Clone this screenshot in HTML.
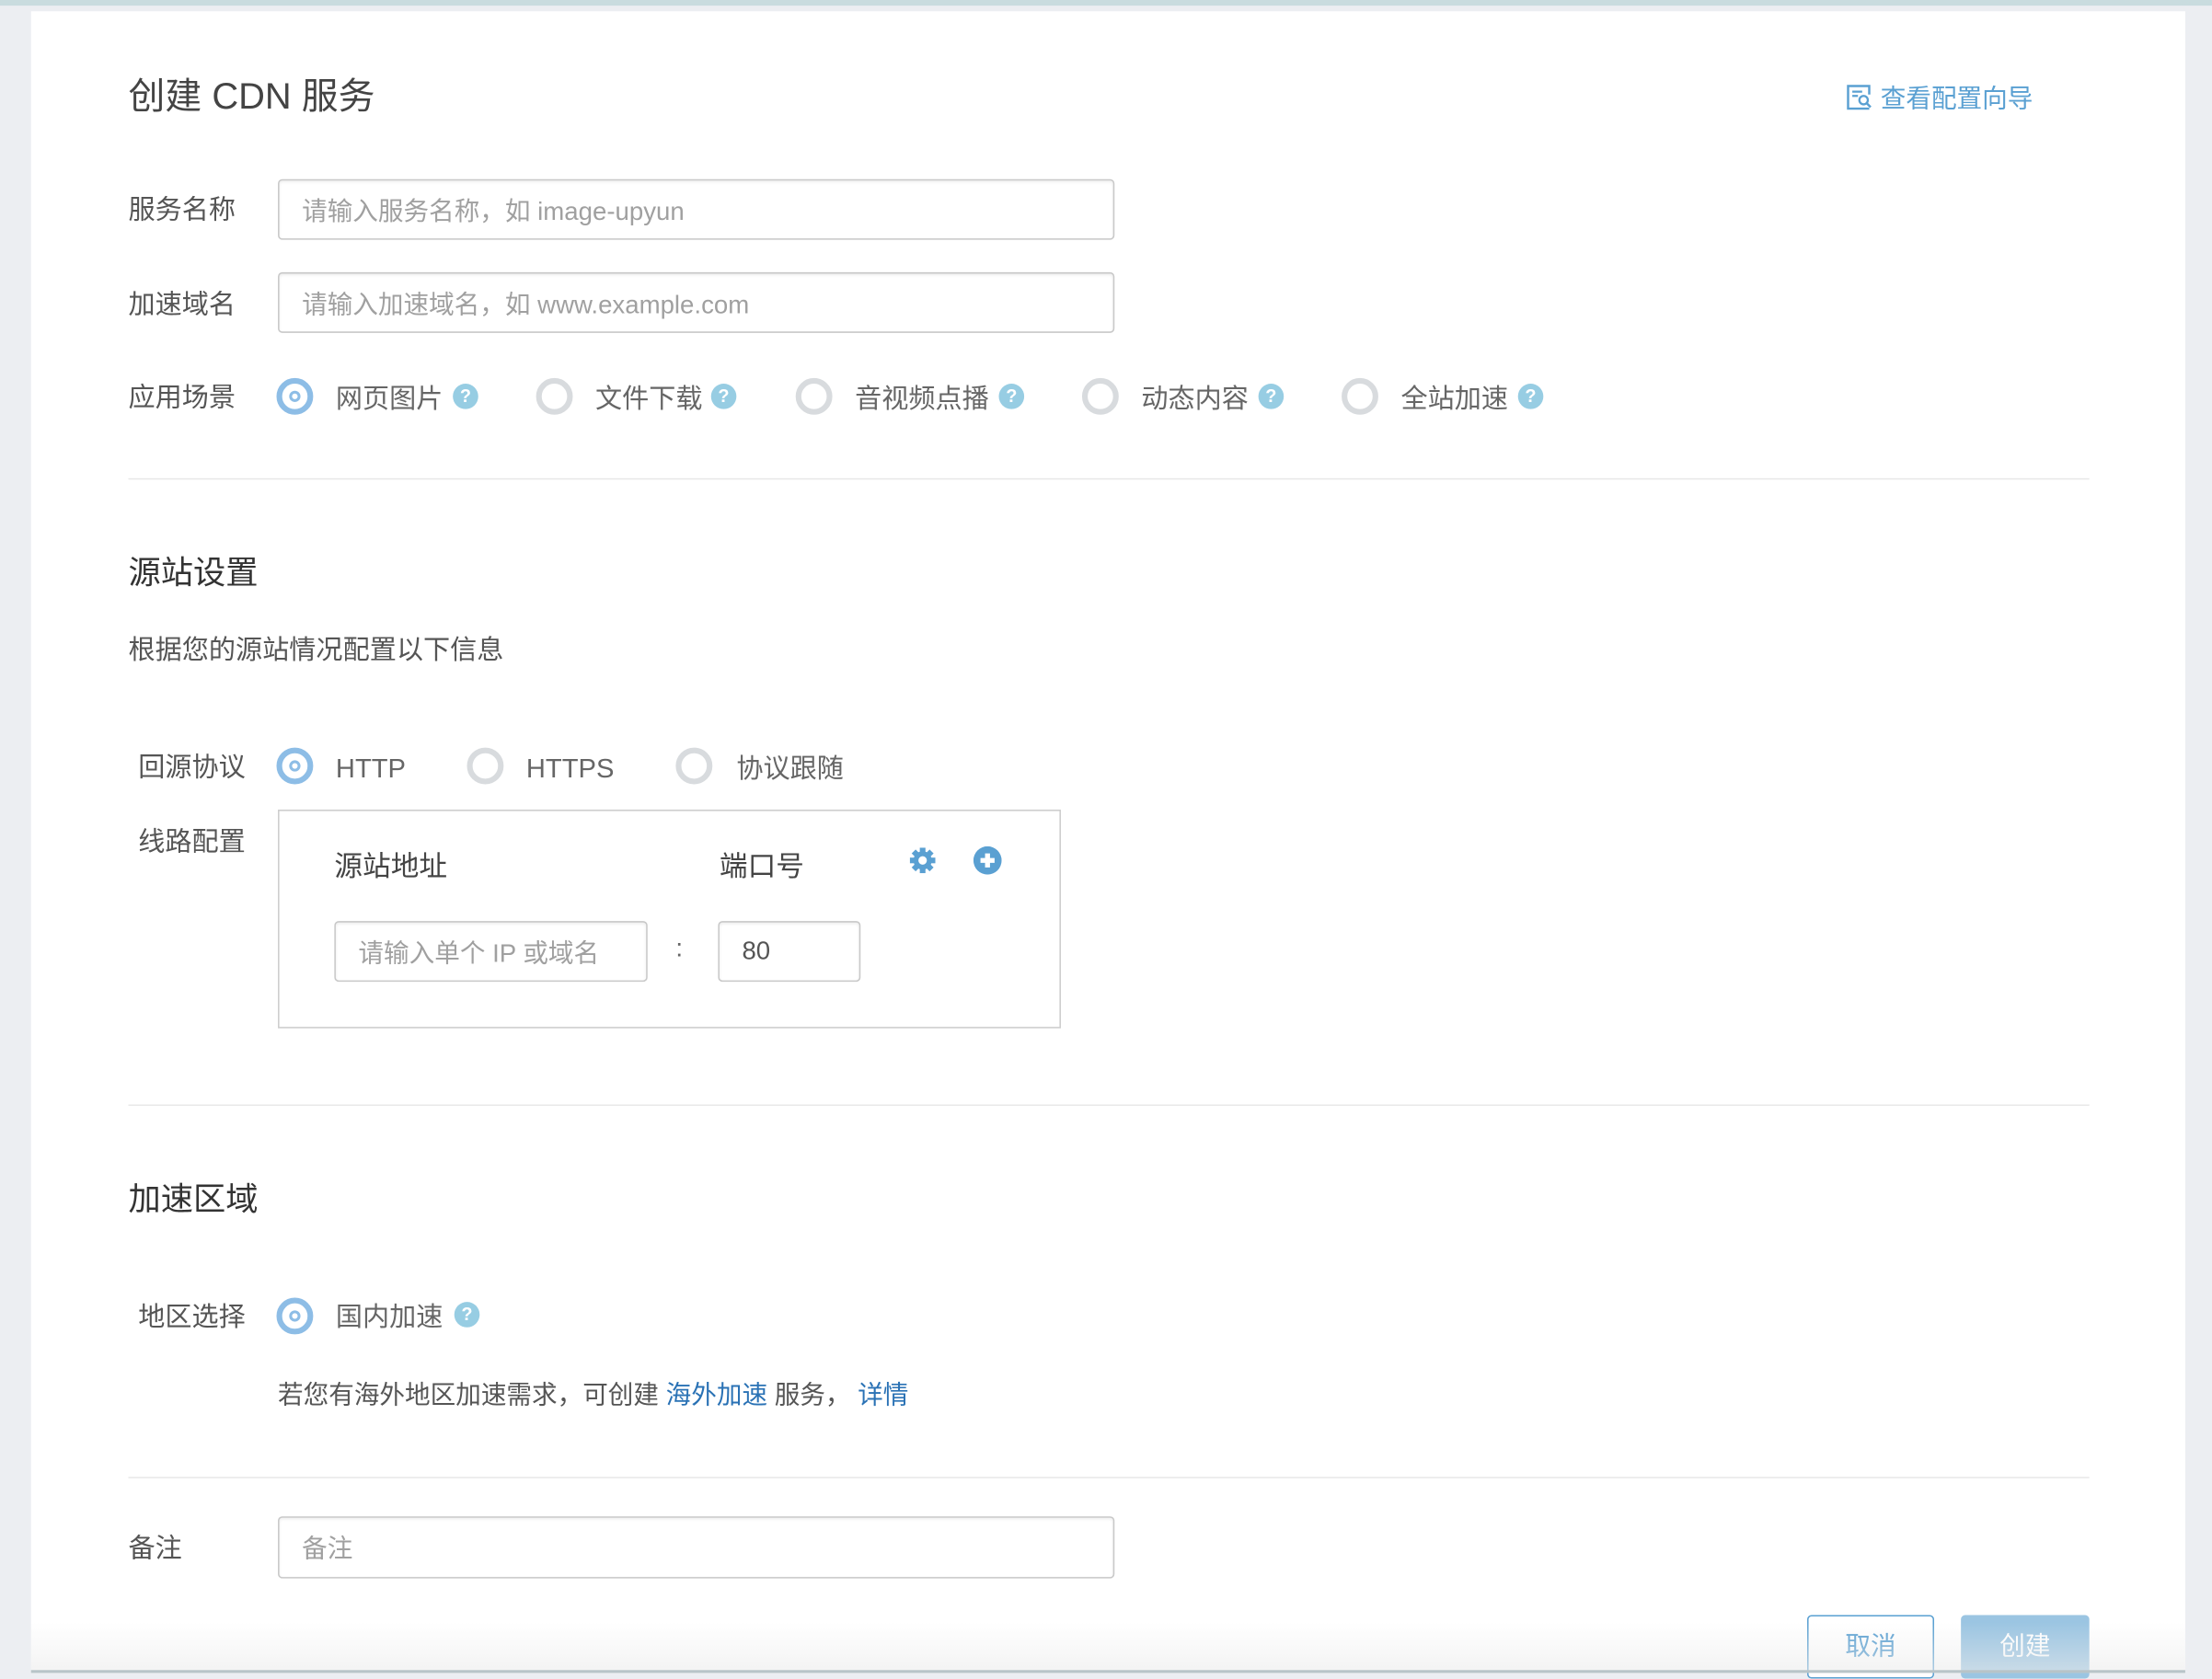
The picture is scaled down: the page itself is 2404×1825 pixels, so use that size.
<!DOCTYPE html>
<html><head><meta charset="utf-8"><style>
html,body{margin:0;padding:0;width:2404px;height:1818px;overflow:hidden;background:#eceef2;}
#s{position:absolute;left:0;top:0;width:1568px;height:1186px;transform:scale(1.5332);transform-origin:0 0;font-family:"Liberation Sans","Noto Sans CJK SC",sans-serif;}
.a{position:absolute;white-space:nowrap;}
.card{position:absolute;left:22px;top:8px;width:1527px;height:1178px;background:#fff;}
.lab{font-size:19px;color:#555;line-height:24px;margin-top:2px;}
.inp{position:absolute;border:1px solid #c8c8c8;border-radius:3px;box-shadow:inset 0 1px 2px rgba(0,0,0,.08);background:#fff;box-sizing:border-box;font-size:18px;color:#a0a0a0;padding-left:16px;display:flex;align-items:center;}
.r{position:absolute;width:26px;height:26px;border-radius:50%;box-sizing:border-box;border:4px solid #d8dbde;background:#fff;}
.r.on{border-color:#8dbde6;}
.r.on::after{content:"";position:absolute;left:5px;top:5px;width:8px;height:8px;border-radius:50%;border:2px solid #8dbde6;box-sizing:border-box;}
.q{position:absolute;width:18px;height:18px;border-radius:50%;background:#97cde3;color:#fff;font-size:13px;font-weight:bold;text-align:center;line-height:18px;}
.hr{position:absolute;left:91px;width:1390px;height:1px;background:#e8e8e8;}
.h2{font-size:23px;color:#333;line-height:28px;margin-top:2px;}
</style></head><body><div id="s">
<div class="a" style="left:0;top:0;width:1568px;height:4px;background:#c9dcdf;"></div>
<div class="card"></div>
<div class="a" style="left:91px;top:52px;font-size:26px;color:#444;line-height:32px;">创建 CDN 服务</div>
<svg class="a" style="left:1308px;top:59px" width="20" height="20" viewBox="0 0 20 20"><path d="M17 8V2H2v16h15" fill="none" stroke="#5aa0d2" stroke-width="1.6"/><path d="M5 6h7M5 9h4" stroke="#5aa0d2" stroke-width="1.5"/><circle cx="13" cy="12" r="3" fill="none" stroke="#5aa0d2" stroke-width="1.5"/><path d="M15 14l3 3" stroke="#5aa0d2" stroke-width="1.6"/></svg>
<div class="a" style="left:1333px;top:58px;font-size:18px;color:#5aa0d2;line-height:24px;">查看配置向导</div>

<div class="a lab" style="left:91px;top:136px;">服务名称</div>
<div class="inp" style="left:197px;top:127px;width:593px;height:43px;">请输入服务名称，如 image-upyun</div>
<div class="a lab" style="left:91px;top:203px;">加速域名</div>
<div class="inp" style="left:197px;top:193px;width:593px;height:43px;">请输入加速域名，如 www.example.com</div>

<div class="a lab" style="left:91px;top:269px;">应用场景</div>
<div class="r on" style="left:196px;top:268px;"></div><div class="a lab" style="left:238px;top:270px;color:#666;">网页图片</div><div class="q" style="left:321px;top:272px;">?</div>
<div class="r" style="left:380px;top:268px;"></div><div class="a lab" style="left:422px;top:270px;color:#666;">文件下载</div><div class="q" style="left:504px;top:272px;">?</div>
<div class="r" style="left:564px;top:268px;"></div><div class="a lab" style="left:606px;top:270px;color:#666;">音视频点播</div><div class="q" style="left:708px;top:272px;">?</div>
<div class="r" style="left:767px;top:268px;"></div><div class="a lab" style="left:809px;top:270px;color:#666;">动态内容</div><div class="q" style="left:892px;top:272px;">?</div>
<div class="r" style="left:951px;top:268px;"></div><div class="a lab" style="left:993px;top:270px;color:#666;">全站加速</div><div class="q" style="left:1076px;top:272px;">?</div>

<div class="hr" style="top:339px;"></div>
<div class="a h2" style="left:91px;top:390px;">源站设置</div>
<div class="a lab" style="left:91px;top:448px;">根据您的源站情况配置以下信息</div>

<div class="a lab" style="left:98px;top:531px;">回源协议</div>
<div class="r on" style="left:196px;top:530px;"></div><div class="a lab" style="left:238px;top:532px;color:#666;">HTTP</div>
<div class="r" style="left:331px;top:530px;"></div><div class="a lab" style="left:373px;top:532px;color:#666;">HTTPS</div>
<div class="r" style="left:479px;top:530px;"></div><div class="a lab" style="left:522px;top:532px;color:#666;">协议跟随</div>
<div class="a lab" style="left:98px;top:584px;">线路配置</div>
<div class="a" style="left:197px;top:574px;width:553px;height:153px;border:1.5px solid #ccc;"></div>
<div class="a" style="left:237px;top:598px;font-size:20px;color:#444;">源站地址</div>
<div class="a" style="left:510px;top:598px;font-size:20px;color:#444;">端口号</div>
<svg class="a" style="left:644px;top:600px" width="20" height="20" viewBox="0 0 20 20"><g fill="#5aa0d2"><circle cx="10" cy="10" r="6.5"/><rect x="8" y="1" width="4" height="18"/><rect x="8" y="1" width="4" height="18" transform="rotate(45 10 10)"/><rect x="8" y="1" width="4" height="18" transform="rotate(90 10 10)"/><rect x="8" y="1" width="4" height="18" transform="rotate(135 10 10)"/></g><circle cx="10" cy="10" r="3" fill="#fff"/></svg>
<svg class="a" style="left:690px;top:600px" width="20" height="20" viewBox="0 0 20 20"><circle cx="10" cy="10" r="10" fill="#5aa0d2"/><path d="M10 5v10M5 10h10" stroke="#fff" stroke-width="3.5"/></svg>
<div class="inp" style="left:237px;top:653px;width:222px;height:43px;">请输入单个 IP 或域名</div>
<div class="a" style="left:479px;top:662px;font-size:18px;color:#666;">:</div>
<div class="inp" style="left:509px;top:653px;width:101px;height:43px;color:#555;">80</div>

<div class="hr" style="top:783px;"></div>
<div class="a h2" style="left:91px;top:834px;">加速区域</div>
<div class="a lab" style="left:98px;top:921px;">地区选择</div>
<div class="r on" style="left:196px;top:920px;"></div><div class="a lab" style="left:238px;top:921px;color:#666;">国内加速</div><div class="q" style="left:322px;top:923px;">?</div>
<div class="a lab" style="left:197px;top:975px;color:#555;font-size:18px;">若您有海外地区加速需求，可创建 <span style="color:#2a72b5">海外加速</span> 服务， <span style="color:#2a72b5">详情</span></div>

<div class="hr" style="top:1047px;"></div>
<div class="a lab" style="left:91px;top:1085px;">备注</div>
<div class="inp" style="left:197px;top:1075px;width:593px;height:44px;">备注</div>

<div class="a" style="left:1281px;top:1145px;width:90px;height:45px;border:1.5px solid #5aa0d2;border-radius:3px;box-sizing:border-box;color:#5aa0d2;font-size:18px;text-align:center;line-height:42px;background:#fff;">取消</div>
<div class="a" style="left:1390px;top:1145px;width:91px;height:45px;border-radius:3px;background:#9bc5e2;color:#fff;font-size:18px;text-align:center;line-height:44px;">创建</div>
<div class="a" style="left:22px;top:1150px;width:1527px;height:36px;background:linear-gradient(rgba(240,240,240,0),rgba(235,235,235,.6));pointer-events:none;"></div>
<div class="a" style="left:22px;top:1184px;width:1527px;height:2px;background:#b8c4c8;"></div>
</div></body></html>
